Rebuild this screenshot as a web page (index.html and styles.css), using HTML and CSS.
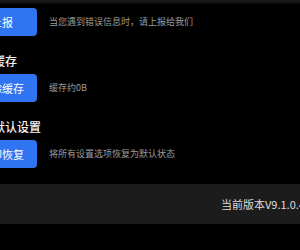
FILE: index.html
```html
<!DOCTYPE html>
<html lang="zh-CN">
<head>
<meta charset="utf-8">
<title>设置</title>
<link rel="stylesheet" href="styles.css">
</head>
<body>
<div class="topbar"></div>
<main class="settings">
  <section class="section">
    <div class="row">
      <button class="btn">一键上报</button>
      <p class="desc">当您遇到错误信息时，请上报给我们</p>
    </div>
  </section>
  <section class="section">
    <h2 class="title">缓存</h2>
    <div class="row">
      <button class="btn">一键清除缓存</button>
      <p class="desc">缓存约0B</p>
    </div>
  </section>
  <section class="section">
    <h2 class="title">默认设置</h2>
    <div class="row">
      <button class="btn">一键立即恢复</button>
      <p class="desc">将所有设置选项恢复为默认状态</p>
    </div>
  </section>
</main>
<footer class="footer"><span class="version">当前版本V9.1.0.4</span></footer>
</body>
</html>
```

FILE: styles.css
```css
html, body {
  margin: 0;
  background: #000;
}
body {
  width: 300px;
  height: 250px;
  overflow: hidden;
  font-family: "Noto Sans CJK SC", "Noto Sans", sans-serif;
}
.topbar {
  height: 4px;
  background: linear-gradient(#1c1c1c, #0a0a0a);
}
.settings {
  margin-left: -55px;
  padding-top: 4px;
  display: flex;
  flex-direction: column;
}
.section + .section {
  margin-top: 17px;
}
.title {
  margin: 0 0 5px 48px;
  font-size: 12px;
  line-height: 16px;
  font-weight: 500;
  color: #f2f2f2;
}
.row {
  display: flex;
  align-items: center;
  gap: 12px;
}
.btn {
  flex: none;
  width: 92px;
  height: 28px;
  padding: 0;
  border: 0;
  border-radius: 4px;
  background: #2f74f0;
  color: #fff;
  font: 11px/1 "Noto Sans CJK SC", "Noto Sans", sans-serif;
  white-space: nowrap;
}
.desc {
  margin: 0;
  font-size: 9px;
  line-height: 12px;
  color: #9c9c9c;
  white-space: nowrap;
}
.footer {
  margin-top: 16px;
  height: 40px;
  background: #1c1c1c;
  display: flex;
  align-items: center;
  padding-left: 221px;
  overflow: hidden;
  white-space: nowrap;
  color: #dcdcdc;
  font-size: 11px;
}
```
